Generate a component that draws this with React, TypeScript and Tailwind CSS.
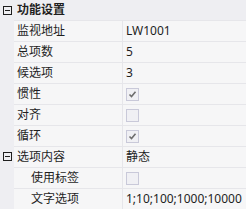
import React from "react";

const font = { fontFamily: '"Noto Sans", "Noto Sans CJK SC", sans-serif' };

function Check({ checked }: { checked: boolean }) {
  return (
    <div className="w-[13px] h-[13px] border border-[#c9c9d9] bg-[#f0f0f4] flex items-center justify-center">
      {checked && (
        <svg width="9" height="9" viewBox="0 0 9 9">
          <path d="M1.5 4.5 L3.5 6.5 L7.5 1.8" fill="none" stroke="#6d6d6d" strokeWidth="1.6" />
        </svg>
      )}
    </div>
  );
}

function Minus() {
  return (
    <div className="w-[9px] h-[9px] border border-[#1e1e1e] flex items-center justify-center">
      <div className="w-[5px] h-px bg-[#1e1e1e]" />
    </div>
  );
}

type Row = { label: string; value?: string; check?: boolean; indent?: boolean; group?: boolean };

const rows: Row[] = [
  { label: "监视地址", value: "LW1001" },
  { label: "总项数", value: "5" },
  { label: "候选项", value: "3" },
  { label: "惯性", check: true },
  { label: "对齐", check: false },
  { label: "循环", check: true },
  { label: "选项内容", value: "静态", group: true },
  { label: "使用标签", check: false, indent: true },
  { label: "文字选项", value: "1;10;100;1000;10000", indent: true },
];

export default function App() {
  return (
    <div className="w-[246px] h-[209px] bg-[#eeeef2] text-[12px] text-[#1e1e1e] overflow-hidden" style={font}>
      <div className="h-[20px] flex items-center">
        <div className="w-[14px] flex justify-center pl-[1px]">
          <Minus />
        </div>
        <span className="pl-[3px] font-bold">功能设置</span>
      </div>
      {rows.map((r, i) => (
        <div key={i} className="h-[21px] flex">
          <div className="w-[14px] flex items-center justify-center pl-[1px]">
            {r.group && <Minus />}
          </div>
          <div className="flex-1 flex border-t border-[#e6e6ea] bg-[#f6f6f7]">
            <div className={`w-[109px] flex items-center border-r border-[#e6e6ea] ${r.indent ? "pl-[17px]" : "pl-[3px]"}`}>
              {r.label}
            </div>
            <div className="flex-1 flex items-center pl-[3px] whitespace-nowrap">
              {r.check !== undefined ? <Check checked={r.check} /> : r.value}
            </div>
          </div>
        </div>
      ))}
    </div>
  );
}
